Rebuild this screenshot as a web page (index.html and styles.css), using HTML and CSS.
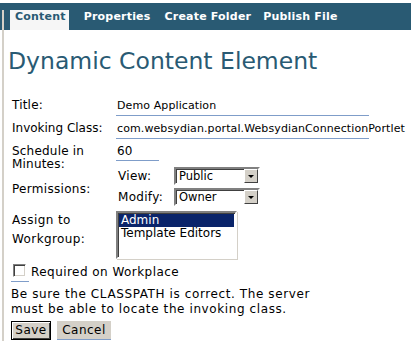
FILE: index.html
```html
<!DOCTYPE html>
<html>
<head>
<meta charset="utf-8">
<link rel="stylesheet" href="styles.css">
</head>
<body>
<div class="page">
  <div class="topbar">
    <span class="tab active">Content</span>
    <span class="tab t2">Properties</span>
    <span class="tab t3">Create Folder</span>
    <span class="tab t4">Publish File</span>
  </div>
  <div class="main">
    <h1 class="title">Dynamic Content Element</h1>
    <div class="form">
      <div class="label">Title:</div>
      <div class="field"><span class="textin wide">Demo Application</span></div>

      <div class="label tight">Invoking Class:</div>
      <div class="field"><span class="textin wide">com.websydian.portal.WebsydianConnectionPortlet</span></div>

      <div class="label two">Schedule in<br>Minutes:</div>
      <div class="field"><span class="textin short">60</span></div>

      <div class="label perm">Permissions:</div>
      <div class="field permgrid">
        <span class="sublabel">View:</span>
        <span class="select"><span class="selval">Public</span><span class="arrow"></span></span>
        <span class="sublabel">Modify:</span>
        <span class="select"><span class="selval">Owner</span><span class="arrow"></span></span>
      </div>

      <div class="label assign">Assign to<br>Workgroup:</div>
      <div class="field">
        <div class="listbox">
          <div class="opt sel">Admin</div>
          <div class="opt">Template Editors</div>
        </div>
      </div>
    </div>
    <div class="checkrow"><span class="checkwrap"><span class="checkbox"></span></span><span class="checklabel">Required on Workplace</span></div>
    <p class="note">Be sure the CLASSPATH is correct. The server must be able to locate the invoking class.</p>
    <div class="buttons">
      <span class="btn save">Save</span>
      <span class="btn cancel">Cancel</span>
    </div>
  </div>
</div>
</body>
</html>
```
FILE: styles.css
```css
html, body {
  margin: 0;
  padding: 0;
  background: #ffffff;
}
body {
  font-family: "DejaVu Sans", Verdana, sans-serif;
  font-size: 12px;
  color: #000;
}
.page {
  padding-top: 3px;
  width: 411px;
  height: 338px;
  overflow: hidden;
  position: relative;
}
.page::before {
  content: "";
  position: absolute;
  left: 2px;
  top: 10px;
  bottom: 0;
  width: 2px;
  background: #d4d0c8;
}
.topbar {
  height: 27px;
  background: #295a73;
  display: flex;
  align-items: flex-end;
  padding-left: 10px;
}
.tab {
  font-weight: bold;
  font-size: 11px;
  color: #ffffff;
  height: 20px;
  line-height: 14px;
  padding: 0 5px;
  white-space: nowrap;
  letter-spacing: 0.2px;
}
.tab.active {
  background: #f6f6f6;
  color: #295a73;
  padding: 0 3px 0 5px;
}
.tab.t2 { margin-left: 10px; }
.tab.t3 { margin-left: 4px; }
.tab.t4 { margin-left: 2px; }
.main {
  padding-left: 11px;
  position: relative;
}
.title {
  margin: 0;
  padding: 17px 0 0 0;
  margin-left: -3px;
  font-weight: normal;
  font-size: 23.5px;
  line-height: 28px;
  color: #295a73;
}
.form {
  display: grid;
  grid-template-columns: 104px auto;
  grid-template-rows: 23px 23px 23px 41px 54px;
  margin-top: 23px;
  margin-left: 1px;
}
.label {
  line-height: 14px;
  white-space: nowrap;
  letter-spacing: 0.2px;
}
.label.tight {
  letter-spacing: 0;
}
.label.two {
  line-height: 13px;
  padding-top: 1px;
}
.label.perm {
  align-self: center;
  padding-top: 3px;
  letter-spacing: 0.3px;
}
.label.assign {
  line-height: 19px;
  padding-top: 3px;
  letter-spacing: 0.4px;
}
.field {
  line-height: 14px;
}
.textin {
  display: inline-block;
  border-bottom: 1px solid #7f9dc9;
  padding-left: 1px;
  height: 16px;
  white-space: nowrap;
  font-size: 11px;
  letter-spacing: 0.1px;
}
.textin.wide { width: 252px; }
.textin.short { width: 42px; font-size: 12px; }
.permgrid {
  display: grid;
  grid-template-columns: 56px auto;
  grid-template-rows: 18px 18px;
  row-gap: 3px;
  align-items: center;
  padding-left: 2px;
}
.sublabel {
  letter-spacing: 0.3px;
}
.select {
  display: inline-flex;
  width: 86px;
  height: 18px;
  box-sizing: border-box;
  border: 2px solid;
  border-color: #808080 #ffffff #ffffff #808080;
  position: relative;
  background: #fff;
  box-shadow: inset 1px 1px 0 #404040;
}
.selval {
  flex: 1;
  padding-left: 3px;
  line-height: 14px;
  font-size: 11.5px;
}
.arrow {
  width: 14px;
  height: 14px;
  box-sizing: border-box;
  background: #d4d0c8;
  border: 1px solid;
  border-color: #ffffff #404040 #404040 #ffffff;
  position: relative;
}
.arrow::after {
  content: "";
  position: absolute;
  left: 3px;
  top: 5px;
  border-left: 3px solid transparent;
  border-right: 3px solid transparent;
  border-top: 3px solid #000;
}
.listbox {
  width: 121px;
  height: 48px;
  box-sizing: border-box;
  border: 2px solid;
  border-color: #808080 #ffffff #ffffff #808080;
  box-shadow: inset 1px 1px 0 #404040, 1px 1px 0 #d4d0c8;
  padding: 1px 1px;
  margin-top: 3px;
}
.opt {
  line-height: 13px;
  padding-left: 2px;
  white-space: nowrap;
}
.opt.sel {
  background: #0a246a;
  color: #fff;
}
.checkrow {
  display: flex;
  align-items: center;
  margin-top: 0;
  height: 20px;
}
.checklabel {
  letter-spacing: 0.45px;
}
.checkwrap {
  display: inline-block;
  width: 18px;
  height: 20px;
  border-bottom: 1px solid #7f9dc9;
  box-sizing: border-box;
  margin-right: 2px;
  position: relative;
}
.checkbox {
  position: absolute;
  left: 2px;
  top: 2px;
  width: 13px;
  height: 13px;
  box-sizing: border-box;
  border: 1px solid;
  border-color: #808080 #ffffff #ffffff #808080;
  box-shadow: inset 1px 1px 0 #404040, inset -1px -1px 0 #d4d0c8;
  background: #fff;
}
.note {
  margin: 5px 0 0 0;
  line-height: 15px;
  width: 318px;
  letter-spacing: 0.6px;
}
.buttons {
  display: flex;
  gap: 6px;
  margin-top: 4px;
}
.btn {
  display: inline-block;
  height: 19px;
  box-sizing: border-box;
  background: #d4d0c8;
  line-height: 15px;
  text-align: center;
  letter-spacing: 0.5px;
}
.btn.save {
  width: 40px;
  border: 1px solid #000;
  box-shadow: inset 1px 1px 0 #fff, inset -1px -1px 0 #404040;
  padding-top: 1px;
}
.btn.cancel {
  width: 54px;
  border-bottom: 1px solid #7f9dc9;
  padding-top: 2px;
}
```
